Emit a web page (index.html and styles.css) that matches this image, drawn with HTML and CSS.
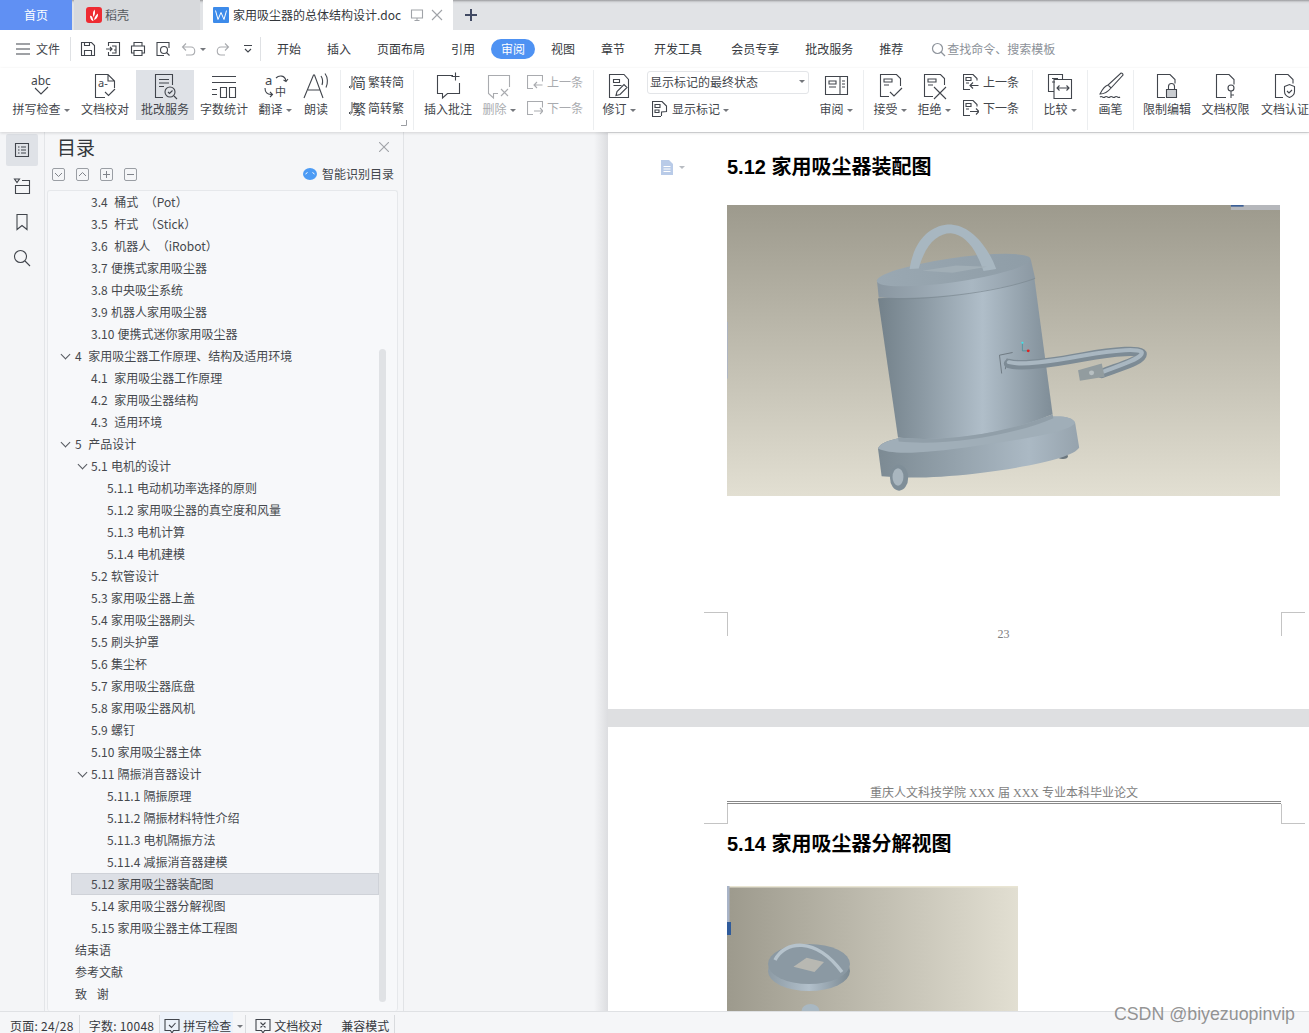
FILE: index.html
```html
<!DOCTYPE html>
<html lang="zh">
<head>
<meta charset="utf-8">
<title>家用吸尘器的总体结构设计.doc</title>
<link rel="stylesheet" href="styles.css">
</head>
<body>
<div class="app">
  <header class="tabbar">
    <div class="tab-home">首页</div>
    <div class="tab-shell">
      <svg class="shell-logo" viewBox="0 0 16 16" width="16" height="16"><rect width="16" height="16" rx="3" fill="#ee2b32"/><path d="M4 9c0 3 2 5 3.500 5C6.500 11 6 8 4 9zM8 13c3-1 4.500-4 3.800-6.500C10 8 8.500 10 8 13zM7.500 10C9 8 9.500 5 8.500 2.500 6.800 4.500 6.600 7.500 7.500 10z" fill="#fff"/></svg>
      <span>稻壳</span>
    </div>
    <div class="tab-doc">
      <svg class="doc-logo" viewBox="0 0 16 16" width="16" height="16"><rect width="16" height="16" rx="1" fill="#3d8bea"/><path d="M2.500 3.500l2.500 9 3-7 3 7 2.500-9" fill="none" stroke="#fff" stroke-width="1"/></svg>
      <span class="doc-name">家用吸尘器的总体结构设计.doc</span>
      <svg class="ic doc-screen" viewBox="0 0 14 14" width="14" height="14"><path class="lt" d="M1.500 2h11v8h-11zM7 10v2.500M4.500 12.500h5"/></svg>
      <svg class="ic doc-x" viewBox="0 0 12 12" width="12" height="12"><path class="lt" d="M1 1l10 10M11 1L1 11"/></svg>
    </div>
    <svg class="ic tab-plus" viewBox="0 0 12 12" width="12" height="12"><path class="plus" d="M6 0v12M0 6h12"/></svg>
  </header>

  <nav class="menubar">
    <svg class="ic burger" viewBox="0 0 14 12" width="14" height="12"><path d="M0 1h14M0 6h14M0 11h14"/></svg>
    <span class="file-label">文件</span>
    <i class="vsep"></i>
    <div class="quick">
      <svg class="ic" viewBox="0 0 16 16" width="16" height="16"><path d="M1.500 1.500h10l3 3v10h-13zM4.500 14.500v-5h7v5M4.500 1.500v3h5v-3"/></svg>
      <svg class="ic" viewBox="0 0 16 16" width="16" height="16"><path d="M3.500 5V1.500h11v13h-11V11M1 8h6M5 6l2 2-2 2M7 5h4v4H9M11 9v3H7"/></svg>
      <svg class="ic" viewBox="0 0 16 16" width="16" height="16"><path d="M4 5V1.500h8V5M4 12H1.500V5h13v7H12M4 9.500h8v5H4z"/></svg>
      <svg class="ic" viewBox="0 0 16 16" width="16" height="16"><path d="M14 7V1.500H2v13h7"/><circle cx="9" cy="9" r="3.500"/><path d="M11.500 11.500l3 3"/></svg>
      <svg class="ic off" viewBox="0 0 16 16" width="16" height="16"><path d="M3 6h8c5 0 5 8 0 8H6M6 2.500L2.500 6 6 9.500"/></svg>
      <b class="caret off-c"></b>
      <svg class="ic off redo" viewBox="0 0 16 16" width="16" height="16"><path d="M13 6H6c-5 0-5 8 0 8h4M10 2.500L13.500 6 10 9.500"/></svg>
      <svg class="ic more" viewBox="0 0 10 10" width="10" height="10"><path d="M1 1.500h8M2 5l3 3 3-3"/></svg>
    </div>
    <i class="vsep sep-tabs"></i>
    <div class="tabs">
      <span>开始</span><span>插入</span><span>页面布局</span><span>引用</span>
      <span class="pill">审阅</span>
      <span>视图</span><span>章节</span><span class="tab-gap">开发工具</span><span class="tab-gap">会员专享</span><span>批改服务</span><span>推荐</span>
    </div>
    <div class="search">
      <svg class="ic" viewBox="0 0 15 15" width="15" height="15"><circle class="sch" cx="6.500" cy="6.500" r="5"/><path class="sch" d="M10 10l4 4"/></svg>
      <span>查找命令、搜索模板</span>
    </div>
  </nav>

  <section class="ribbon">
    <div class="rb w66">
      <svg class="ic" viewBox="0 0 30 30" width="30" height="30"><text class="svgt" x="5" y="14" font-size="12">abc</text><path d="M9 17l6 6 7-7"/></svg>
      <span class="lb">拼写检查<b class="caret"></b></span>
    </div>
    <div class="rb w62">
      <svg class="ic" viewBox="0 0 30 30" width="30" height="30"><path d="M15 26.500H5.500v-23H18l6.500 6.500v7M18 3.500V10h6.500"/><text class="svgt" x="8" y="16" font-size="11">a-</text><path d="M15 21l3.500 3.500L25 18"/></svg>
      <span class="lb">文档校对</span>
    </div>
    <div class="rb w58 active">
      <svg class="ic" viewBox="0 0 30 30" width="30" height="30"><path d="M13 26.500H5.500v-23h17V14M9 8.500h10M9 12h10M9 15.500h5"/><circle cx="20" cy="21" r="5"/><path d="M18 21l1.500 1.500L22.500 19.500M24 25l3 3"/></svg>
      <span class="lb">批改服务</span>
    </div>
    <div class="rb w60">
      <svg class="ic" viewBox="0 0 30 30" width="30" height="30"><path d="M3 5.500h24M3 11.500h24M3 18.500h5M3 23.500h5M11.500 16.500h6v10h-6zM20.500 16.500h6v10h-6z"/></svg>
      <span class="lb">字数统计</span>
    </div>
    <div class="rb w42">
      <svg class="ic" viewBox="0 0 30 30" width="30" height="30"><text class="svgt" x="5" y="14" font-size="13">a</text><text class="svgt" x="15" y="25" font-size="11">中</text><path d="M16 7c3-3 9-3 10 3M28 8l-2 2.500L23.500 9M5 17c0 4 2 7 7 6.500M10 21l2.500 2.500L10 26"/></svg>
      <span class="lb">翻译<b class="caret"></b></span>
    </div>
    <div class="rb w40">
      <svg class="ic" viewBox="0 0 30 30" width="30" height="30"><path d="M3 27L12.500 4h1L22 27M7 19h12M20 5c2 3 2 6 1 9M24 2.500c3 4 3 10 1 14"/></svg>
      <span class="lb">朗读</span>
    </div>
    <i class="hsep"></i>
    <div class="col w64">
      <div class="cr"><svg class="ic hook" viewBox="0 0 5 14" width="5" height="14"><path d="M4 1v11H1M2.500 10.500L1 12l1.500 1.500"/></svg><span class="gl">简</span><span>繁转简</span></div>
      <div class="cr"><svg class="ic hook" viewBox="0 0 5 14" width="5" height="14"><path d="M4 1v11H1M2.500 10.500L1 12l1.500 1.500"/></svg><span class="gl">繁</span><span>简转繁</span></div>
      <svg class="corner" viewBox="0 0 6 6" width="6" height="6"><path d="M5.500 0v5.500H0" fill="none" stroke="#9a9da2"/></svg>
    </div>
    <i class="hsep"></i>
    <div class="rb w60">
      <svg class="ic" viewBox="0 0 30 30" width="30" height="30"><path d="M20 4.500H4.500v18h5v4.500l5-4.500h12V12M22.500 1.500v8M18.500 5.500h8"/></svg>
      <span class="lb">插入批注</span>
    </div>
    <div class="rb w42 dis">
      <svg class="ic off" viewBox="0 0 30 30" width="30" height="30"><path d="M14 22.500H9.500V27l-5-4.500V4.500h21V16M17 18l7 7M24 18l-7 7"/></svg>
      <span class="lb">删除<b class="caret"></b></span>
    </div>
    <div class="col w69 dis">
      <div class="cr"><svg class="ic off" viewBox="0 0 16 16" width="16" height="16"><path d="M6 14.500H.5v-13h15v6M15.500 11H7M10 8l-3 3 3 3"/></svg><span>上一条</span></div>
      <div class="cr"><svg class="ic off" viewBox="0 0 16 16" width="16" height="16"><path d="M6 14.500H.5v-13h15v6M7 11h8.500M13 8l3 3-3 3"/></svg><span>下一条</span></div>
    </div>
    <i class="hsep"></i>
    <div class="rb w42">
      <svg class="ic" viewBox="0 0 30 30" width="30" height="30"><path d="M5.500 3.500H20l4.500 5v18h-19zM9.500 8.500h6v3h-6zM9.500 14.500h8M12 24.500l1-4 7-7 3 3-7 7z"/></svg>
      <span class="lb">修订<b class="caret"></b></span>
    </div>
    <div class="col w174 markup">
      <div class="select"><span>显示标记的最终状态</span><b class="caret"></b></div>
      <div class="cr cr-in"><svg class="ic" viewBox="0 0 16 16" width="16" height="16"><path d="M9 15.500H.5V.5H10l4.500 4.500v5.500l-5 .5v4M3 3.500h5v3H3zM3 9h4v2.500H3z"/></svg><span>显示标记<b class="caret"></b></span></div>
    </div>
    <div class="rb w44">
      <svg class="ic" viewBox="0 0 30 30" width="30" height="30"><path d="M4.500 5.500h22v18h-22zM19 5.500v18M8 10h7v3H8zM8 16h7M21 10h3M21 13h3M21 16h3"/></svg>
      <span class="lb">审阅<b class="caret"></b></span>
    </div>
    <i class="hsep sep-r"></i>
    <div class="rb w44">
      <svg class="ic" viewBox="0 0 30 30" width="30" height="30"><path d="M14 25.500H5.500v-22h16l4 4V15M9 8h8v3H9zM9 14h5M15 21l4 4 8-8"/></svg>
      <span class="lb">接受<b class="caret"></b></span>
    </div>
    <div class="rb w44">
      <svg class="ic" viewBox="0 0 30 30" width="30" height="30"><path d="M14 25.500H5.500v-22h16l4 4V14M9 8h8v3H9zM9 14h5M15 16l12 12M27 16L15 28"/></svg>
      <span class="lb">拒绝<b class="caret"></b></span>
    </div>
    <div class="col w72">
      <div class="cr"><svg class="ic" viewBox="0 0 16 16" width="16" height="16"><path d="M7 15.500H.5V.5H10l4 4v2M3 3.500h5v3H3zM3 9h3M15.500 11.500H7M10 8.500l-3 3 3 3"/></svg><span>上一条</span></div>
      <div class="cr"><svg class="ic" viewBox="0 0 16 16" width="16" height="16"><path d="M7 15.500H.5V.5H10l4 4v2M3 3.500h5v3H3zM3 9h3M7 11.500h8.500M13 8.500l3 3-3 3"/></svg><span>下一条</span></div>
    </div>
    <i class="hsep"></i>
    <div class="rb w46">
      <svg class="ic" viewBox="0 0 30 30" width="30" height="30"><path d="M9 20.500H3.500v-17h14v5M7 7.500h6M7 11h3M9 8.500h17.500v19H9zM12 17h12M14.500 14.500L12 17l2.500 2.500M21.500 14.500L24 17l-2.500 2.500"/></svg>
      <span class="lb">比较<b class="caret"></b></span>
    </div>
    <i class="hsep"></i>
    <div class="rb w37">
      <svg class="ic" viewBox="0 0 30 30" width="30" height="30"><path d="M25 2c1 0 2 1 2 2L15 17l-3-3zM12 14c-4 1-6 5-8 9 3 0 7-1 11-6M4 26c2-2 3 2 5 0s3 2 5 0 3 2 5 0 3 2 5 0"/></svg>
      <span class="lb">画笔</span>
    </div>
    <i class="hsep"></i>
    <div class="rb w58">
      <svg class="ic" viewBox="0 0 30 30" width="30" height="30"><path d="M13 26.500H5.500v-23H18l5 5v4"/><path class="lock" d="M14.500 18.500h10v8h-10z"/><path d="M16.500 18.500v-3a3 3 0 0 1 6 0v3"/></svg>
      <span class="lb">限制编辑</span>
    </div>
    <div class="rb w59">
      <svg class="ic" viewBox="0 0 30 30" width="30" height="30"><path d="M15 26.500H5.500v-23H18l5 5v5"/><circle cx="20" cy="17" r="3"/><path d="M20 20v7M20 24h3"/></svg>
      <span class="lb">文档权限</span>
    </div>
    <div class="rb w60">
      <svg class="ic" viewBox="0 0 30 30" width="30" height="30"><path d="M13 26.500H5.500v-23H18l5 5v4M14.500 15.500l5-2 5 2v5c0 3-2.500 5-5 6-2.500-1-5-3-5-6zM17 20l2 2 3-3"/></svg>
      <span class="lb">文档认证</span>
    </div>
  </section>

  <main class="work">
    <aside class="rail">
      <div class="rail-btn on"><svg class="ic" viewBox="0 0 16 16" width="16" height="16"><path d="M1.500 1.500h13v13h-13zM4 5h1.500M7 5h5M4 8h1.500M7 8h5M4 11h1.500M7 11h5"/></svg></div>
      <div class="rail-btn"><svg class="ic" viewBox="0 0 18 16" width="18" height="16"><path d="M1.500 1h5L4 4.500zM9 2.500h7.500v13h-14V7.500h14"/></svg></div>
      <div class="rail-btn"><svg class="ic" viewBox="0 0 14 18" width="14" height="18"><path d="M2 1.500h10v15l-5-4-5 4z"/></svg></div>
      <div class="rail-btn"><svg class="ic" viewBox="0 0 18 18" width="18" height="18"><circle cx="7.500" cy="7.500" r="6"/><path d="M12 12l5 5"/></svg></div>
    </aside>
    <section class="panel">
      <div class="panel-head">
        <h2>目录</h2>
        <svg class="ic panel-x" viewBox="0 0 10 10" width="10" height="10"><path class="lt" d="M0 0l10 10M10 0L0 10"/></svg>
      </div>
      <div class="panel-tools">
        <span class="sq"><svg viewBox="0 0 9 9" width="9" height="9"><path d="M1 3l3.500 3.500L8 3"/></svg></span>
        <span class="sq"><svg viewBox="0 0 9 9" width="9" height="9"><path d="M1 6l3.500-3.500L8 6"/></svg></span>
        <span class="sq"><svg viewBox="0 0 9 9" width="9" height="9"><path d="M4.500 1v7M1 4.500h7"/></svg></span>
        <span class="sq"><svg viewBox="0 0 9 9" width="9" height="9"><path d="M1 4.500h7"/></svg></span>
        <span class="smart"><svg viewBox="0 0 14 12" width="14" height="12"><ellipse cx="7" cy="6" rx="7" ry="6" fill="#4c9bf5"/><path d="M2.500 6l2-1.500M11.500 6l-2-1.500" stroke="#fff" fill="none"/></svg>智能识别目录</span>
      </div>
      <div class="toc">
        <div class="row l2">3.4  桶式  （Pot）</div>
        <div class="row l2">3.5  杆式  （Stick）</div>
        <div class="row l2">3.6  机器人  （iRobot）</div>
        <div class="row l2">3.7 便携式家用吸尘器</div>
        <div class="row l2">3.8 中央吸尘系统</div>
        <div class="row l2">3.9 机器人家用吸尘器</div>
        <div class="row l2">3.10 便携式迷你家用吸尘器</div>
        <div class="row l1 open">4  家用吸尘器工作原理、结构及适用环境</div>
        <div class="row l2">4.1  家用吸尘器工作原理</div>
        <div class="row l2">4.2  家用吸尘器结构</div>
        <div class="row l2">4.3  适用环境</div>
        <div class="row l1 open">5  产品设计</div>
        <div class="row l2 open">5.1 电机的设计</div>
        <div class="row l3">5.1.1 电动机功率选择的原则</div>
        <div class="row l3">5.1.2 家用吸尘器的真空度和风量</div>
        <div class="row l3">5.1.3 电机计算</div>
        <div class="row l3">5.1.4 电机建模</div>
        <div class="row l2">5.2 软管设计</div>
        <div class="row l2">5.3 家用吸尘器上盖</div>
        <div class="row l2">5.4 家用吸尘器刷头</div>
        <div class="row l2">5.5 刷头护罩</div>
        <div class="row l2">5.6 集尘杯</div>
        <div class="row l2">5.7 家用吸尘器底盘</div>
        <div class="row l2">5.8 家用吸尘器风机</div>
        <div class="row l2">5.9 螺钉</div>
        <div class="row l2">5.10 家用吸尘器主体</div>
        <div class="row l2 open">5.11 隔振消音器设计</div>
        <div class="row l3">5.11.1 隔振原理</div>
        <div class="row l3">5.11.2 隔振材料特性介绍</div>
        <div class="row l3">5.11.3 电机隔振方法</div>
        <div class="row l3">5.11.4 减振消音器建模</div>
        <div class="row l2 sel">5.12 家用吸尘器装配图</div>
        <div class="row l2">5.14 家用吸尘器分解视图</div>
        <div class="row l2">5.15 家用吸尘器主体工程图</div>
        <div class="row l1">结束语</div>
        <div class="row l1">参考文献</div>
        <div class="row l1">致   谢</div>
        <div class="thumb"></div>
      </div>
    </section>
    <section class="canvas">
      <article class="page page-one">
        <div class="page-head">
          <div class="gutter"><svg viewBox="0 0 14 15" width="14" height="15"><path d="M1 0h8l4 4v11H1z" fill="#b9cbe8"/><path d="M3.500 6.500h7M3.500 9h7M3.500 11.500h7" stroke="#fff"/></svg><b class="caret"></b></div>
          <h1>5.12 家用吸尘器装配图</h1>
        </div>
        <svg class="shot-one" viewBox="20 15 1520 872" width="553" height="291" preserveAspectRatio="none">
          <defs>
            <linearGradient id="bg1" x1="0" y1="0" x2="0" y2="1"><stop offset="0" stop-color="#9d9a8d"/><stop offset="1" stop-color="#e2dfd2"/></linearGradient>
            <linearGradient id="metal" x1="0" y1="0" x2="1" y2="0"><stop offset="0" stop-color="#73818a"/><stop offset=".25" stop-color="#8b99a3"/><stop offset=".6" stop-color="#b0bec9"/><stop offset="1" stop-color="#7f8d97"/></linearGradient>
            <linearGradient id="base" x1="0" y1="0" x2="1" y2="0"><stop offset="0" stop-color="#7c8a93"/><stop offset=".75" stop-color="#abb9c4"/><stop offset="1" stop-color="#96a3ad"/></linearGradient>
            <linearGradient id="lid" x1="0" y1="0" x2="1" y2="0"><stop offset="0" stop-color="#8996a0"/><stop offset=".6" stop-color="#a9b7c2"/><stop offset="1" stop-color="#8c99a3"/></linearGradient>
            <linearGradient id="lidtop" x1="0" y1="0" x2="1" y2="0"><stop offset="0" stop-color="#9aa8b2"/><stop offset="1" stop-color="#8f9da7"/></linearGradient>
          </defs>
          <rect x="20" y="15" width="1520" height="872" fill="url(#bg1)"/>
          <rect x="1405" y="15" width="135" height="15" fill="#b5b7bb"/>
          <rect x="1405" y="15" width="35" height="5" fill="#3b5f96"/>
          <rect x="20" y="365" width="2" height="170" fill="#a8b3c9"/>
          <ellipse cx="943" cy="768" rx="14" ry="8" fill="#6b767d"/>
          <path d="M435 745C445 715 520 708 600 695L800 668C880 650 965 635 977 668L988 742C975 770 860 800 700 820 600 832 520 835 445 828Z" fill="url(#base)"/>
          <path d="M435 745C470 765 560 760 700 738 840 716 960 695 977 668 965 635 880 650 800 668L600 695C520 708 445 715 435 745Z" fill="#a0aeb8"/>
          <path d="M490 712C620 728 800 695 915 642L865 235 435 295Z" fill="url(#metal)"/>
          <path d="M490 712C620 728 800 695 915 642L917 654C800 708 620 738 492 724Z" fill="#919fa9"/>
          <path d="M432 240L437 292C560 300 760 275 867 235L855 178Z" fill="url(#lid)"/>
          <ellipse cx="643" cy="210" rx="214" ry="36" transform="rotate(-9 643 210)" fill="url(#lidtop)"/>
          <path d="M522 207C535 110 590 70 640 74 692 80 738 140 760 207L725 213C705 150 678 105 635 100 597 100 565 135 547 205Z" fill="#a8b7c1"/>
          <path d="M556 212L650 196 735 200 640 218Z" fill="#a1aeb6"/>
          <path d="M437 295C560 303 760 278 867 235" fill="none" stroke="#7b8890" stroke-width="2"/>
          <path d="M769 465l36-8M769 465l6 55M790 475l-5 32" fill="none" stroke="#59646b" stroke-width="2"/>
          <path d="M795 490C830 500 900 490 1000 470 1090 452 1160 448 1160 462 1160 480 1110 495 1050 520" fill="none" stroke="#7d8b95" stroke-width="28" stroke-linecap="round"/>
          <path d="M795 486C830 496 900 486 1000 466 1090 448 1160 444 1160 458 1160 476 1110 491 1050 516" fill="none" stroke="#a9b7c1" stroke-width="12" stroke-linecap="round"/>
          <path d="M985 510L1050 490 1058 530 990 542Z" fill="#929c9f"/>
          <circle cx="1022" cy="518" r="7" fill="#b8c0c2"/>
          <path d="M832 428v24h14" fill="none" stroke="#3c8e9a" stroke-width="2"/>
          <circle cx="832" cy="428" r="3" fill="#3ce8ef"/>
          <circle cx="848" cy="452" r="4" fill="#e02020"/>
          <ellipse cx="493" cy="832" rx="25" ry="39" fill="#7f8e98"/>
          <ellipse cx="490" cy="830" rx="15" ry="26" fill="#a9b6bf"/>
        </svg>
        <div class="marks">
          <span class="mark left"></span>
          <span class="folio">23</span>
          <span class="mark right"></span>
        </div>
      </article>
      <article class="page page-two">
        <div class="running">重庆人文科技学院 XXX 届 XXX 专业本科毕业论文</div>
        <div class="marks top">
          <span class="mark-b left"></span>
          <span class="mark-b right"></span>
        </div>
        <h1 class="h-two">5.14 家用吸尘器分解视图</h1>
        <svg class="shot-two" viewBox="0 0 291 230" width="291" height="230">
          <defs>
            <linearGradient id="bg2" x1="0" y1="0" x2="1" y2="0"><stop offset="0" stop-color="#9d9a8d"/><stop offset="1" stop-color="#e2dfd2"/></linearGradient>
            <linearGradient id="rim2" x1="0" y1="0" x2="1" y2="0"><stop offset="0" stop-color="#8d9ba5"/><stop offset=".5" stop-color="#b2c0cb"/><stop offset="1" stop-color="#7b8992"/></linearGradient>
          </defs>
          <rect width="291" height="230" fill="url(#bg2)"/>
          <rect width="291" height="1.500" fill="#e9e5d3"/>
          <rect width="2.500" height="36" fill="#a9b4c7"/>
          <rect y="36" width="4" height="13" fill="#2f5b9b"/>
          <ellipse cx="82" cy="85" rx="41" ry="20" fill="url(#rim2)"/>
          <ellipse cx="82" cy="78" rx="41" ry="20" fill="#8b99a3"/>
          <path d="M48 74C58 55 88 50 115 86" fill="none" stroke="#b6c3cc" stroke-width="3.500"/>
          <path d="M66.500 80.700L79.600 71.700 97 76 87.500 86z" fill="#b8b8b2"/>
          <ellipse cx="83.500" cy="125" rx="9" ry="7" fill="#a9b8c2"/>
        </svg>
      </article>
    </section>
  </main>

  <footer class="status">
    <span class="st">页面: 24/28</span><i class="ssep"></i>
    <span class="st">字数: 10048</span><i class="ssep"></i>
    <span class="st spell"><svg class="ic" viewBox="0 0 16 16" width="16" height="16"><path d="M1 1.500h14v11H9.500L8 15l-1.500-2.500H1zM5 7l2.500 2.500L11.500 5"/></svg>拼写检查</span><b class="caret s-caret"></b><i class="ssep s-gap"></i>
    <span class="st proof"><svg class="ic" viewBox="0 0 16 16" width="16" height="16"><path d="M1 1.500h14v11H9.500L8 15l-1.500-2.500H1zM5.500 4.500l5 5M10.500 4.500l-5 5"/></svg>文档校对</span>
    <span class="st compat">兼容模式</span><i class="ssep"></i>
  </footer>
  <div class="watermark">CSDN @biyezuopinvip</div>
</div>
</body>
</html>
```
FILE: styles.css
```css
* { box-sizing: border-box; }
html, body { margin: 0; height: 100%; overflow: hidden; }
body { font: 12px/16px "Noto Sans CJK SC", "Noto Sans", sans-serif; color: #43464c; background: #fff; }
.app { position: relative; width: 1309px; height: 1033px; display: flex; flex-direction: column; overflow: hidden; }

.ic { fill: none; stroke: #41454c; stroke-width: 1.1; flex: none; display: block; }
.ic.off { stroke: #a9abaf; }
.ic .lt { stroke: #a0a3a8; }
.ic .plus { stroke: #414a63; stroke-width: 2; }
.ic .sch { stroke: #8e949c; stroke-width: 1.2; }
.ic .lock { fill: #c9ccd0; }
.svgt { fill: #41454c; stroke: none; font-family: "Noto Sans", "Noto Sans CJK SC", sans-serif; }
.caret { display: inline-block; width: 0; height: 0; border: 3px solid transparent; border-top: 3px solid #74777c; border-bottom: 0; margin-left: 3px; vertical-align: 2px; }

/* tab bar */
.tabbar { height: 30px; flex: none; display: flex; align-items: stretch; background: linear-gradient(#9b9c9f 0, #d5d7da 2px, #e1e3e6 4px); }
.tab-home { width: 72px; background: #6090f3; color: #fff; display: flex; align-items: center; justify-content: center; }
.tab-shell { margin-left: 2px; width: 126px; background: #d7d9dc; display: flex; align-items: center; gap: 3px; padding-left: 12px; color: #55585d; }
.tab-doc { margin-left: 3px; width: 250px; background: #fff; display: flex; align-items: center; padding-left: 10px; }
.doc-logo { margin-right: 4px; flex: none; }
.doc-name { width: 170px; white-space: nowrap; color: #33363b; }
.doc-screen { margin-left: 7px; }
.doc-x { margin-left: 7px; }
.tab-plus { align-self: center; margin-left: 12px; }

/* menu bar */
.menubar { height: 38px; flex: none; display: flex; align-items: center; padding-left: 16px; background: #fff; }
.file-label { margin-left: 6px; }
.vsep { width: 1px; height: 24px; background: #dfe1e4; margin-left: 10px; flex: none; }
.quick { display: flex; align-items: center; margin-left: 9px; width: 180px; }
.quick .ic { margin-right: 9px; }
.quick .off { margin-right: 3px; margin-left: 0; }
.off-c { margin: 0 0 0 1px; }
.quick .redo { margin-left: 9px; margin-right: 12px; }
.quick .more { margin: 0; }
.sep-tabs { margin-left: 0; }
.tabs { display: flex; gap: 26px; margin-left: 16px; align-items: center; color: #36393e; }
.pill { background: #4e92f3; color: #fff; border-radius: 10px; height: 20px; line-height: 20px; width: 44px; text-align: center; margin: 0 -10px; }
.tab-gap { margin-left: 3px; }
.search { display: flex; align-items: center; gap: 1px; margin-left: 28px; color: #8c9198; }

/* ribbon */
.ribbon { position: relative; z-index: 2; height: 64px; flex: none; display: flex; align-items: stretch; padding-left: 8px; background: #fff; box-shadow: 0 1px 3px rgba(0, 0, 0, .14); }
.rb { display: flex; flex-direction: column; align-items: center; padding-top: 3px; flex: none; height: 50px; white-space: nowrap; margin-top: 2px; }
.rb > .ic { margin-top: -2px; }
.lb { display: block; margin-top: 0; }
.w37 { width: 37px; } .w40 { width: 40px; } .w42 { width: 42px; } .w44 { width: 44px; } .w46 { width: 46px; }
.w58 { width: 58px; } .w59 { width: 59px; } .w60 { width: 60px; } .w62 { width: 62px; } .w64 { width: 64px; } .w66 { width: 66px; }
.w69 { width: 69px; } .w72 { width: 72px; } .w174 { width: 174px; }
.active { background: #dfe2e7; }
.dis { color: #a9abaf; }
.hsep { width: 1px; flex: none; background: #eceef0; margin: 2px 4px; }
.sep-r { margin-left: 5px; }
.col { position: relative; flex: none; padding: 1px 0 0 3px; white-space: nowrap; }
.w69, .w72, .w174 { padding-left: 7px; }
.cr { height: 26px; display: flex; align-items: center; gap: 4px; }
.cr-in { margin-left: 5px; }
.hook { margin-right: -5px; stroke-width: .9; }
.gl { font-size: 14px; width: 14px; line-height: 16px; color: #41454c; text-align: center; margin-right: -2px; }
.corner { position: absolute; right: 2px; bottom: 6px; }
.select { height: 23px; width: 162px; border: 1px solid #e3e5e8; border-radius: 3px; margin: 2px 0; display: flex; align-items: center; justify-content: space-between; padding: 0 3px 2px 2px; }

/* workspace */
.work { flex: 1; min-height: 0; display: flex; background: #f4f5f7; }
.rail { width: 45px; flex: none; background: #f4f5f7; border-right: 1px solid #e3e5e8; padding: 2px 6px 0; display: flex; flex-direction: column; gap: 4px; }
.rail-btn { width: 32px; height: 32px; display: flex; align-items: center; justify-content: center; border-radius: 2px; }
.rail-btn.on { background: #dfe2e7; }
.panel { width: 359px; flex: none; background: #f5f6f8; border-right: 1px solid #e1e3e6; padding: 0 5px 0 2px; display: flex; flex-direction: column; }
.panel-head { display: flex; align-items: center; justify-content: space-between; padding: 0 9px 0 10px; height: 30px; }
.panel-head h2 { margin: 0; font-size: 19px; line-height: 24px; font-weight: 400; color: #33363b; }
.panel-tools { display: flex; align-items: center; gap: 11px; padding: 0 4px 2px 5px; height: 26px; }
.sq { width: 13px; height: 13px; border: 1px solid #9a9ea4; border-radius: 2px; display: flex; align-items: center; justify-content: center; }
.sq svg { fill: none; stroke: #7f838a; }
.smart { margin-left: auto; display: flex; align-items: center; gap: 5px; color: #43464c; }
.toc { position: relative; flex: 1; min-height: 0; background: #f7f8fa; border: 1px solid #e6e8eb; border-radius: 3px; border-bottom: 0; margin-top: 2px; overflow: hidden; }
.row { position: relative; height: 22px; line-height: 22px; margin-left: 23px; width: 308px; white-space: pre; word-spacing: .6px; color: #45484d; }
.l1 { padding-left: 4px; } .l2 { padding-left: 20px; } .l3 { padding-left: 36px; }
.open::before { content: ""; position: absolute; top: 6px; width: 6px; height: 6px; border-right: 1px solid #55585e; border-bottom: 1px solid #55585e; transform: rotate(45deg); }
.l1.open::before { left: -9px; }
.l2.open::before { left: 8px; }
.sel { background: #dcdfe5; border: 1px solid #cfd2d8; line-height: 20px; padding-left: 19px; }
.thumb { position: absolute; left: 331px; top: 158px; width: 7px; height: 653px; border-radius: 4px; background: #e0e2e5; }

/* document canvas */
.canvas { flex: 1; min-width: 0; padding: 1px 0 0 204px; overflow: hidden; background: linear-gradient(to right, #f4f5f7 190px, #dcdde0 204px) left / 204px 100% no-repeat, #dedfe1; }
.page { width: 701px; background: #fff; }
.page-one { height: 576px; margin-bottom: 18px; padding-top: 20px; }
.page-two { height: 700px; padding-top: 56px; }
h1 { margin: 0; font: 700 20px/28px "Liberation Sans", "Noto Sans CJK SC", sans-serif; color: #000; }
.page-head { display: flex; padding-left: 52px; }
.gutter { width: 67px; display: flex; align-items: center; }
.gutter .caret { border-top-color: #b8bcc2; margin-left: 5px; }
.shot-one { display: block; margin: 24px 0 0 119px; }
.marks { display: flex; justify-content: space-between; width: 601px; margin: 116px 0 0 96px; height: 30px; }
.mark { width: 24px; height: 24px; border-top: 1px solid #c4c4c4; }
.mark.left { border-right: 1px solid #c4c4c4; }
.mark.right { border-left: 1px solid #c4c4c4; }
.folio { align-self: flex-end; margin-right: 2px; font: 12px/16px "Liberation Serif", serif; color: #7e7e7e; }
.running { width: 554px; margin-left: 119px; height: 21px; text-align: center; font: 12px/20px "Liberation Serif", "Noto Sans CJK SC", serif; color: #7e7e7e; white-space: nowrap; border-bottom: 3px double #888; }
.marks.top { margin: 0 0 0 96px; height: 20px; }
.mark-b { width: 24px; height: 20px; border-bottom: 1px solid #c4c4c4; }
.mark-b.left { border-right: 1px solid #c4c4c4; }
.mark-b.right { border-left: 1px solid #c4c4c4; }
.h-two { margin: 6px 0 0 119px; }
.shot-two { display: block; margin: 28px 0 0 119px; }

/* status bar */
.status { height: 22px; flex: none; background: #f5f6f8; border-top: 1px solid #dfe1e4; display: flex; align-items: flex-start; padding-left: 10px; overflow: hidden; color: #36393e; }
.st { display: flex; align-items: center; gap: 2px; padding-top: 6px; height: 22px; white-space: nowrap; letter-spacing: .25px; }
.ssep { width: 1px; height: 18px; margin: 3px 9px 0 5px; background: #d9dbde; }
.spell { background: #ecf2fa; width: 73px; margin-left: -9px; padding-left: 4px; gap: 3px; letter-spacing: 0; }
.s-caret { margin: 13px 0 0 4px; }
.s-gap { margin-left: 2px; }
.proof { width: 76px; gap: 3px; letter-spacing: 0; }
.compat { margin-left: 10px; letter-spacing: 0; }
.watermark { position: absolute; right: 14px; top: 1003px; font: 17.8px/22px "Liberation Sans", sans-serif; color: rgba(120, 120, 120, .8); }
```
